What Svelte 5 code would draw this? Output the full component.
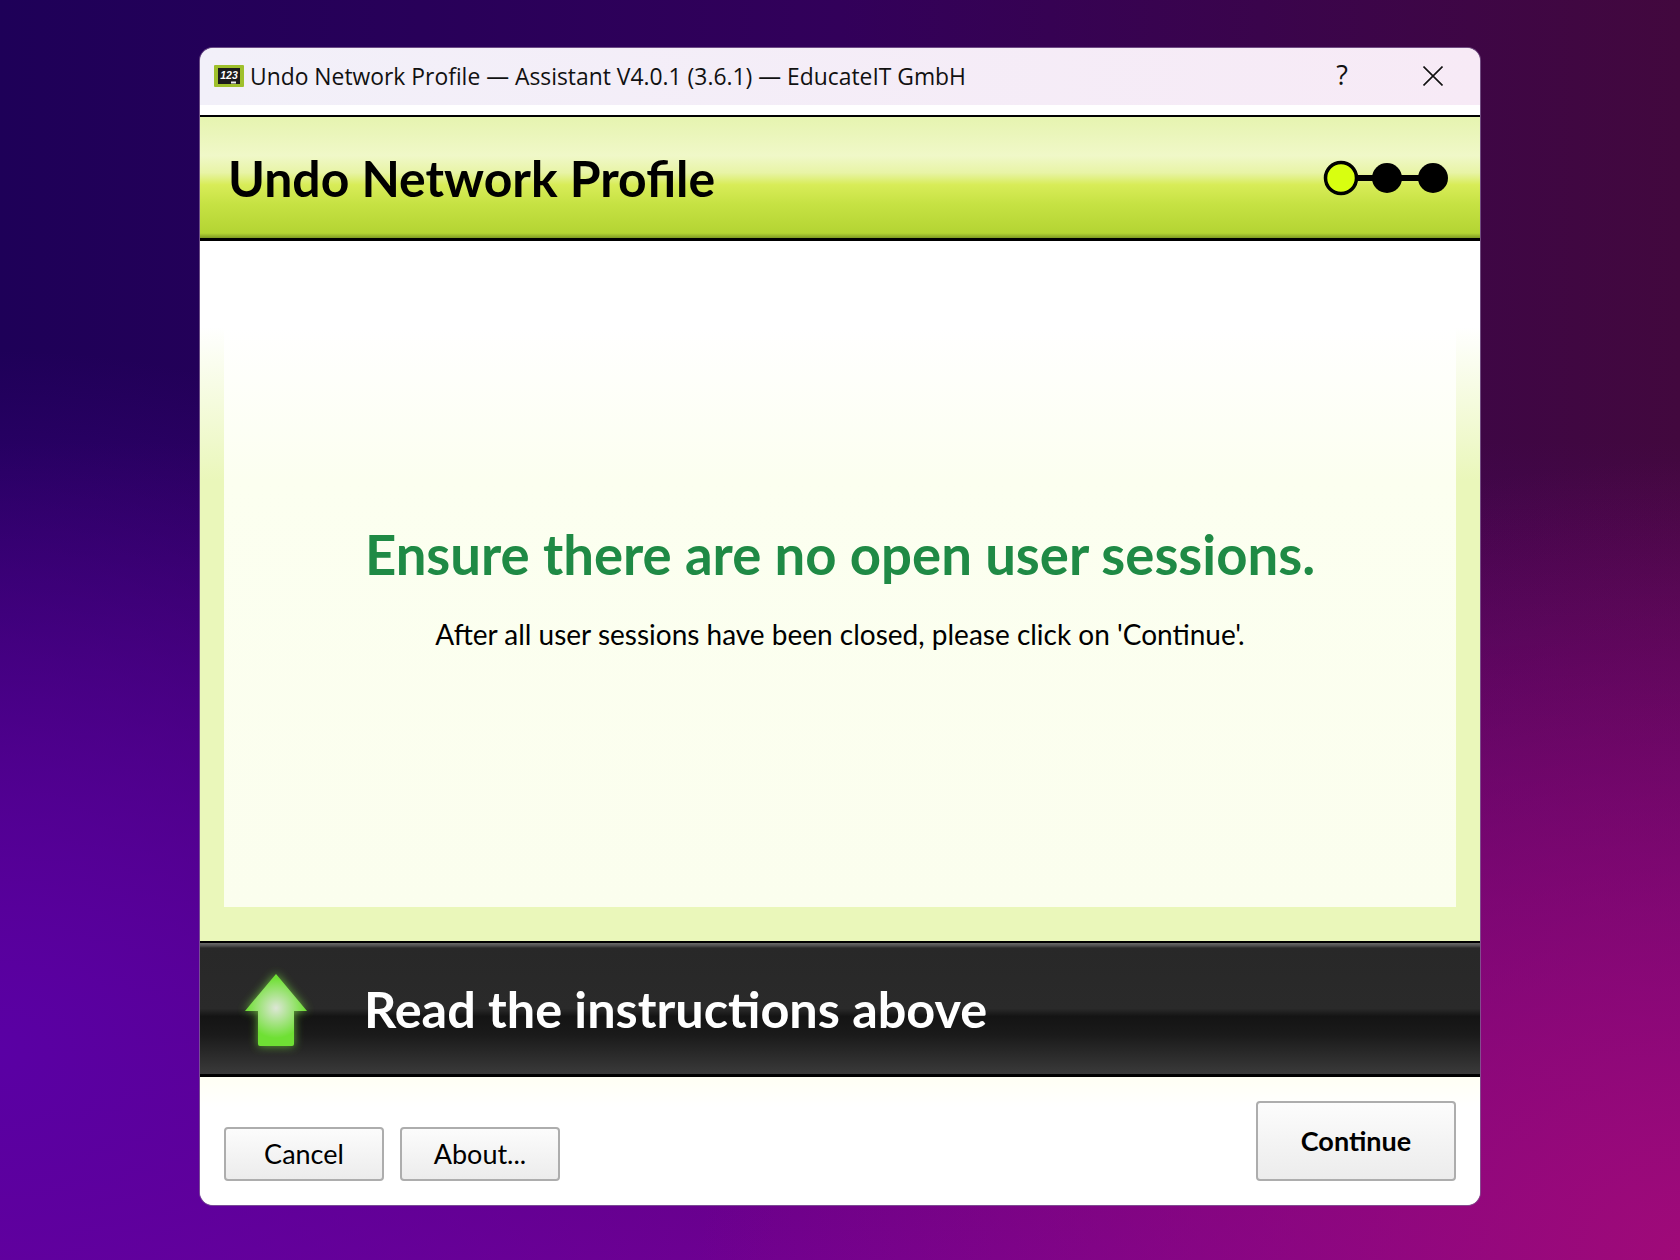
<script>
    const steps = [
        { x: 21, r: 15.5, fill: '#d8ff10' },
        { x: 67, r: 15, fill: '#000' },
        { x: 113, r: 15, fill: '#000' }
    ];
</script>

<div class="desktop">
    <div class="window">
        <div class="titlebar">
            <svg class="appicon" width="30" height="22" viewBox="0 0 30 22">
                <rect x="0" y="0" width="30" height="22" rx="1" fill="#9fc02c" />
                <rect x="4" y="3" width="22" height="16" fill="#1c1c1c" />
                <text x="15" y="14" text-anchor="middle" class="chalk">123</text>
                <rect x="17" y="16.5" width="5" height="2" fill="#eee" />
            </svg>
            <span class="wintitle">Undo Network Profile — Assistant V4.0.1 (3.6.1) — EducateIT GmbH</span>
            <span class="help">?</span>
            <svg class="close" width="20" height="20" viewBox="0 0 20 20">
                <path d="M0.5 0.5 L19.5 19.5 M19.5 0.5 L0.5 19.5" stroke="#111" stroke-width="1.6" fill="none" />
            </svg>
        </div>

        <header class="header">
            <h1>Undo Network Profile</h1>
            <svg class="stepper" width="130" height="36" viewBox="0 0 130 36">
                <line x1="21" y1="18" x2="113" y2="18" stroke="#000" stroke-width="6" />
                {#each steps as step, i}
                    <circle
                        cx={step.x}
                        cy="18"
                        r={step.r}
                        fill={step.fill}
                        stroke="#000"
                        stroke-width={i === 0 ? 3.5 : 0}
                    />
                {/each}
            </svg>
        </header>

        <main class="content">
            <div class="panel">
                <h2>Ensure there are no open user sessions.</h2>
                <p>After all user sessions have been closed, please click on 'Continue'.</p>
            </div>
        </main>

        <div class="instruction">
            <svg class="arrow" width="100" height="110" viewBox="0 0 100 110">
                <defs>
                    <radialGradient id="shine" cx="50" cy="54" r="30" gradientUnits="userSpaceOnUse">
                        <stop offset="0" stop-color="#dde6d6" />
                        <stop offset="1" stop-color="#6fe034" />
                    </radialGradient>
                    <filter id="glow" x="-40%" y="-40%" width="180%" height="180%">
                        <feGaussianBlur stdDeviation="5" />
                    </filter>
                </defs>
                <path d="M50 20 L81 57 L68 57 L68 92 L32 92 L32 57 L19 57 Z" fill="#7ae040" opacity="0.75" filter="url(#glow)" />
                <path d="M50 20 L81 57 L68 57 L68 90 Q68 92 66 92 L34 92 Q32 92 32 90 L32 57 L19 57 Z" fill="url(#shine)" />
            </svg>
            <span class="hint">Read the instructions above</span>
        </div>

        <footer class="footer">
            <button class="btn">Cancel</button>
            <button class="btn">About...</button>
            <button class="btn primary">Continue</button>
        </footer>
    </div>
</div>

<style>
    :global(body) {
        margin: 0;
    }

    .desktop {
        width: 1680px;
        height: 1260px;
        box-sizing: border-box;
        padding: 47px 199px 0;
        overflow: hidden;
        background:
            radial-gradient(1000px 800px at 1700px 1260px, #a00a78 0%, rgba(160, 10, 120, 0) 100%),
            radial-gradient(800px 700px at 0px 1050px, #5a00a4 0%, rgba(90, 0, 164, 0) 100%),
            linear-gradient(180deg, rgba(0, 0, 0, 0) 35%, #6e0090 100%),
            linear-gradient(90deg, #1e0058 0%, #32005a 50%, #42083e 100%);
    }

    .window {
        width: 1280px;
        height: 1157px;
        display: flex;
        flex-direction: column;
        border: 1px solid rgba(130, 100, 150, 0.75);
        border-radius: 14px;
        overflow: hidden;
        background: #fff;
        background-clip: padding-box;
        font-family: Lato, sans-serif;
    }

    .titlebar {
        height: 57px;
        flex: none;
        display: flex;
        align-items: center;
        padding: 0 37px 1px 14px;
        box-sizing: border-box;
        background: linear-gradient(90deg, #f2f0f9, #f7eaf6);
        margin-bottom: 10px;
    }

    .appicon {
        margin-right: 6px;
    }

    .chalk {
        font-family: "Liberation Sans", sans-serif;
        font-size: 10.5px;
        font-style: italic;
        font-weight: 700;
        fill: #fff;
    }

    .wintitle {
        flex: 1;
        font-family: "Open Sans", sans-serif;
        font-size: 22.87px;
        color: #111;
    }

    .help {
        font-family: "Open Sans", sans-serif;
        font-size: 27px;
        color: #111;
        margin: 0 75px 3px 0;
    }

    .close {
        margin-bottom: 1px;
    }

    .header {
        height: 126px;
        flex: none;
        box-sizing: border-box;
        display: flex;
        align-items: center;
        justify-content: space-between;
        padding: 0 30px 0 28px;
        border-top: 2px solid #000;
        border-bottom: 3px solid #000;
        background: linear-gradient(180deg, #e6f4b0 0%, #f0f8c8 32%, #e8f4a6 46%, #d8ec58 56%, #c6e243 72%, #b4d433 96%, #7f9a22 100%);
    }

    h1 {
        margin: 0;
        font-size: 49.9px;
        font-weight: 700;
        color: #000;
    }

    .content {
        height: 700px;
        flex: none;
        box-sizing: border-box;
        padding: 0 24px 34px;
        background: linear-gradient(180deg, #fff 0, #fff 86px, #eaf7ba 240px, #eaf7ba 100%);
    }

    .panel {
        height: 100%;
        box-sizing: border-box;
        padding-top: 24px;
        display: flex;
        flex-direction: column;
        align-items: center;
        justify-content: center;
        background: linear-gradient(180deg, #fff 0, #fff 86px, #fcfff0 240px, #fbfeee 100%);
    }

    h2 {
        margin: 0 0 30px;
        font-size: 54.5px;
        font-weight: 700;
        color: #1f8a45;
    }

    p {
        margin: 0;
        font-size: 28px;
        color: #000;
    }

    .instruction {
        height: 136px;
        flex: none;
        box-sizing: border-box;
        display: flex;
        align-items: center;
        padding-left: 26px;
        border-top: 2px solid #000;
        border-bottom: 3px solid #000;
        background: linear-gradient(180deg, #6a6a6a 0, #4a4a4a 3px, #282828 5px, #2a2a2a 50%, #141414 56%, #1a1a1a 70%, #3a3a3a 100%);
    }

    .arrow {
        margin-right: 38px;
    }

    .hint {
        font-size: 50.4px;
        font-weight: 700;
        color: #fff;
    }

    .footer {
        flex: 1;
        display: flex;
        align-items: flex-end;
        gap: 16px;
        padding: 0 24px 24px;
        background: linear-gradient(180deg, #fffff4 0, #fff 30px);
    }

    .btn {
        width: 160px;
        height: 54px;
        border: 2px solid #adadad;
        border-radius: 4px;
        background: linear-gradient(180deg, #fcfcfc, #ececec);
        font-family: Lato, sans-serif;
        font-size: 27px;
        color: #000;
        padding: 0 0 2px;
    }

    .primary {
        margin-left: auto;
        width: 200px;
        height: 80px;
        font-weight: 700;
    }
</style>
